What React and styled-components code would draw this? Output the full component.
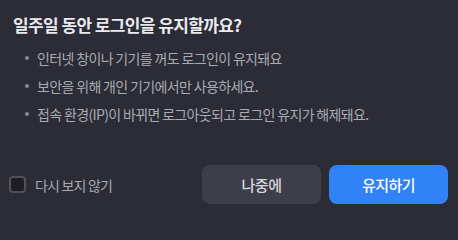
import React, { useState } from 'react';
import styled, { createGlobalStyle } from 'styled-components';

const GlobalStyle = createGlobalStyle`
  html, body {
    margin: 0;
    padding: 0;
    background: #2b2c35;
  }
  body {
    font-family: "Noto Sans CJK KR", "Noto Sans", sans-serif;
    -webkit-font-smoothing: antialiased;
  }
`;

const Dialog = styled.div`
  box-sizing: border-box;
  width: 458px;
  height: 214px;
  background: #2b2c35;
  display: flex;
  flex-direction: column;
  padding: 14px 10px 10px 13px;
`;

const Title = styled.h2`
  margin: 0;
  font-size: 17px;
  font-weight: 700;
  letter-spacing: -0.6px;
  line-height: 22px;
  color: #e9e9ee;
`;

const List = styled.ul`
  list-style: none;
  margin: 12px 0 0;
  padding: 0 0 0 12px;
  display: flex;
  flex-direction: column;
  gap: 8px;
`;

const Item = styled.li`
  display: flex;
  align-items: center;
  gap: 8px;
  font-size: 14px;
  line-height: 20px;
  letter-spacing: -0.65px;
  color: #a9aab3;

  &::before {
    content: '';
    width: 4px;
    height: 4px;
    border-radius: 50%;
    background: #8a8b94;
    flex: none;
  }
`;

const Footer = styled.div`
  margin-top: auto;
  display: flex;
  align-items: center;
`;

const CheckLabel = styled.label`
  display: flex;
  align-items: center;
  gap: 9px;
  font-size: 14px;
  letter-spacing: -0.8px;
  color: #a9aab3;
  cursor: pointer;
  margin-left: -4px;
`;

const Box = styled.span`
  box-sizing: border-box;
  width: 17px;
  height: 17px;
  border-radius: 4px;
  border: 2px solid #50515b;
  background: ${p => (p.checked ? '#3182f6' : '#1d1d23')};
`;

const Buttons = styled.div`
  margin-left: auto;
  display: flex;
  gap: 8px;
`;

const Button = styled.button`
  width: 119px;
  height: 39px;
  border: none;
  border-radius: 8px;
  font-family: inherit;
  font-size: 15px;
  font-weight: 500;
  letter-spacing: -0.5px;
  cursor: pointer;
  background: ${p => (p.primary ? '#3182f6' : '#3d3e49')};
  color: ${p => (p.primary ? '#ffffff' : '#d6d6dc')};
`;

export default function App() {
  const [checked, setChecked] = useState(false);
  const notes = [
    '인터넷 창이나 기기를 꺼도 로그인이 유지돼요',
    '보안을 위해 개인 기기에서만 사용하세요.',
    '접속 환경(IP)이 바뀌면 로그아웃되고 로그인 유지가 해제돼요.',
  ];

  return (
    <>
      <GlobalStyle />
      <Dialog>
        <Title>일주일 동안 로그인을 유지할까요?</Title>
        <List>
          {notes.map(n => (
            <Item key={n}>{n}</Item>
          ))}
        </List>
        <Footer>
          <CheckLabel onClick={() => setChecked(!checked)}>
            <Box checked={checked} />
            다시 보지 않기
          </CheckLabel>
          <Buttons>
            <Button>나중에</Button>
            <Button primary>유지하기</Button>
          </Buttons>
        </Footer>
      </Dialog>
    </>
  );
}
